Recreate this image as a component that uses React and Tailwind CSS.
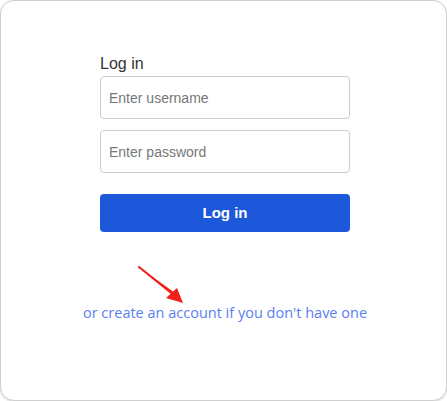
export default function App() {
  return (
    <div className="w-[447px] h-[401px] bg-white">
      <div className="w-full h-full rounded-[14px] border border-[#cfcfcf] shadow-[0_1px_2px_rgba(0,0,0,0.15)] bg-white flex flex-col items-center relative" style={{ fontFamily: '"Liberation Sans", Arial, sans-serif' }}>
        <div className="w-[250px] mt-[53px] ml-[3px] flex flex-col">
          <div className="text-[16px] leading-[20px] text-[#333]">Log in</div>
          <input
            className="mt-[2px] h-[43px] w-full border border-[#ccc] rounded-[4px] px-[8px] text-[14px] text-[#333] placeholder:text-[#777] outline-none"
            placeholder="Enter username"
          />
          <input
            type="password"
            className="mt-[11px] h-[43px] w-full border border-[#ccc] rounded-[4px] px-[8px] text-[14px] text-[#333] placeholder:text-[#777] outline-none"
            placeholder="Enter password"
          />
          <button className="mt-[21px] h-[38px] w-full rounded-[4px] bg-[#1c58d9] text-white text-[15px] font-bold">
            Log in
          </button>
        </div>
        <svg className="absolute left-[136px] top-[264px]" width="50" height="42" viewBox="0 0 50 42">
          <path d="M2 2 L36 30 L38 28 Z" fill="#f0201a" />
          <path d="M2 2 L38 31" stroke="#f0201a" strokeWidth="2.2" strokeLinecap="round" fill="none" />
          <path d="M46 38 L29 33 L40 23 Z" fill="#f0201a" />
        </svg>
        <div className="mt-[70px] ml-[3px] text-[14.5px] text-[#5b7ef2]" style={{ fontFamily: '"Open Sans", sans-serif' }}>
          or create an account if you don't have one
        </div>
      </div>
    </div>
  );
}
